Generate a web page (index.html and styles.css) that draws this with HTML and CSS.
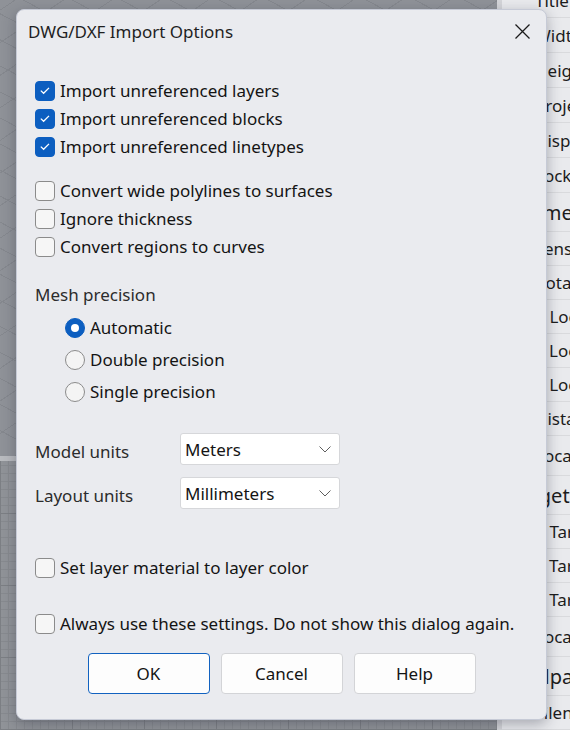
FILE: index.html
```html
<!DOCTYPE html>
<html lang="en">
<head>
    <meta charset="UTF-8">
    <meta name="viewport" content="width=device-width, initial-scale=1.0">
    <title>DWG/DXF Import Options</title>
    <link rel="stylesheet" href="styles.css">
</head>
<body>
    <div class="workspace">
        <div class="viewports">
            <div class="viewport perspective"></div>
            <div class="viewport-divider"></div>
            <div class="viewport plan"></div>
        </div>
        <div class="properties">
            <div class="prop-list">
                <div class="prop-row wide">Title</div>
                <div class="prop-row wide">Width</div>
                <div class="prop-row wide">Height</div>
                <div class="prop-row wide">Projection</div>
                <div class="prop-row wide">Display Mode</div>
                <div class="prop-row wide">Locked</div>
                <div class="prop-head">Camera</div>
                <div class="prop-row">Lens length</div>
                <div class="prop-row">Rotation</div>
                <div class="prop-row">X Location</div>
                <div class="prop-row">Y Location</div>
                <div class="prop-row">Z Location</div>
                <div class="prop-row">Distance to target</div>
                <div class="prop-row tall">Location</div>
                <div class="prop-head outdented">Target</div>
                <div class="prop-row">X Target</div>
                <div class="prop-row">Y Target</div>
                <div class="prop-row">Z Target</div>
                <div class="prop-row tall">Location</div>
                <div class="prop-head outdented">Wallpaper</div>
                <div class="prop-row">Filename</div>
            </div>
        </div>
    </div>

    <div class="dialog">
        <div class="dialog-header">
            <span class="dialog-title">DWG/DXF Import Options</span>
            <button class="close-button" aria-label="Close">
                <svg width="15" height="15" viewBox="0 0 15 15">
                    <path d="M0.5 0.5 L14.5 14.5 M14.5 0.5 L0.5 14.5" stroke="#1b1b1b" stroke-width="1.3" fill="none"/>
                </svg>
            </button>
        </div>

        <div class="dialog-body">
            <div class="option-group first">
                <label class="check-row"><span class="checkbox checked"><svg width="20" height="20" viewBox="0 0 20 20"><path d="M5.8 9.6 L8.6 12.3 L14 6.9" stroke="#fff" stroke-width="1.3" fill="none"/></svg></span>Import unreferenced layers</label>
                <label class="check-row"><span class="checkbox checked"><svg width="20" height="20" viewBox="0 0 20 20"><path d="M5.8 9.6 L8.6 12.3 L14 6.9" stroke="#fff" stroke-width="1.3" fill="none"/></svg></span>Import unreferenced blocks</label>
                <label class="check-row"><span class="checkbox checked"><svg width="20" height="20" viewBox="0 0 20 20"><path d="M5.8 9.6 L8.6 12.3 L14 6.9" stroke="#fff" stroke-width="1.3" fill="none"/></svg></span>Import unreferenced linetypes</label>
            </div>

            <div class="option-group second">
                <label class="check-row"><span class="checkbox"></span>Convert wide polylines to surfaces</label>
                <label class="check-row"><span class="checkbox"></span>Ignore thickness</label>
                <label class="check-row"><span class="checkbox"></span>Convert regions to curves</label>
            </div>

            <div class="section-label">Mesh precision</div>
            <div class="radio-group">
                <label class="radio-row"><span class="radio selected"></span>Automatic</label>
                <label class="radio-row"><span class="radio"></span>Double precision</label>
                <label class="radio-row"><span class="radio"></span>Single precision</label>
            </div>

            <div class="units">
                <div class="unit-row">
                    <span class="unit-label">Model units</span>
                    <div class="select">Meters<svg width="12" height="7" viewBox="0 0 12 7"><path d="M0.5 0.5 L6 6 L11.5 0.5" stroke="#5f5f5f" stroke-width="1" fill="none"/></svg></div>
                </div>
                <div class="unit-row">
                    <span class="unit-label">Layout units</span>
                    <div class="select">Millimeters<svg width="12" height="7" viewBox="0 0 12 7"><path d="M0.5 0.5 L6 6 L11.5 0.5" stroke="#5f5f5f" stroke-width="1" fill="none"/></svg></div>
                </div>
            </div>

            <label class="check-row material"><span class="checkbox"></span>Set layer material to layer color</label>
            <label class="check-row always"><span class="checkbox"></span>Always use these settings. Do not show this dialog again.</label>

            <div class="buttons">
                <button class="dialog-button default">OK</button>
                <button class="dialog-button">Cancel</button>
                <button class="dialog-button">Help</button>
            </div>
        </div>
    </div>
</body>
</html>
```

FILE: styles.css
```css
body {
    margin: 0;
    font-family: "Noto Sans", "Open Sans", sans-serif;
    font-size: 17px;
    color: #141414;
    width: 570px;
    height: 730px;
    overflow: hidden;
    position: relative;
}

.workspace {
    display: flex;
    width: 570px;
    height: 730px;
}

.viewports {
    width: 497px;
    display: flex;
    flex-direction: column;
}

.viewport.perspective {
    height: 456px;
    background-color: #8f9298;
    background-image:
        repeating-linear-gradient(28deg, transparent 0, transparent 22px, #85888e 22px, #85888e 23px),
        repeating-linear-gradient(-34deg, transparent 0, transparent 26px, #85888e 26px, #85888e 27px);
}

.viewport-divider {
    height: 5px;
    background-color: #b9bbbf;
}

.viewport.plan {
    flex: 1;
    background-color: #909398;
    background-image:
        repeating-linear-gradient(90deg, #7c7f84 0, #7c7f84 1px, transparent 1px, transparent 72px),
        repeating-linear-gradient(0deg, #7c7f84 0, #7c7f84 1px, transparent 1px, transparent 72px),
        repeating-linear-gradient(90deg, #878a8f 0, #878a8f 1px, transparent 1px, transparent 8px),
        repeating-linear-gradient(0deg, #878a8f 0, #878a8f 1px, transparent 1px, transparent 8px);
}

.properties {
    flex: 1;
    background-color: #e9eaed;
    border-left: 5px solid #d4d5d9;
    overflow: hidden;
}

.prop-list {
    margin-top: -17px;
}

.prop-row,
.prop-head {
    display: flex;
    align-items: center;
    padding-left: 33px;
    border-bottom: 1px solid #d9dadd;
    box-sizing: border-box;
    white-space: nowrap;
    color: #1c1c1c;
}

.prop-row {
    height: 34px;
}

.prop-row.wide {
    height: 35px;
}

.prop-row.tall {
    height: 40px;
}

.prop-head {
    height: 39px;
    padding-left: 17px;
    font-size: 20px;
}

.prop-head.outdented {
    padding-left: 8px;
}

/* dialog */

.dialog {
    position: absolute;
    left: 16px;
    top: 9px;
    width: 531px;
    height: 711px;
    box-sizing: border-box;
    background-color: #eaebef;
    border: 1px solid #c6cad6;
    border-radius: 8px;
    box-shadow: 0 4px 14px rgba(40, 44, 60, 0.35);
}

.dialog-header {
    height: 42px;
    display: flex;
    align-items: center;
    justify-content: space-between;
    padding: 0 16px 0 11px;
}

.dialog-title {
    font-size: 17px;
    color: #1f1f1f;
}

.close-button {
    background: none;
    border: none;
    padding: 0;
    width: 15px;
    height: 15px;
    display: flex;
}

.dialog-body {
    padding: 0 18px;
}

.option-group.first {
    margin-top: 24px;
}

.option-group.second {
    margin-top: 16px;
}

.check-row {
    display: flex;
    align-items: center;
    height: 28px;
    white-space: nowrap;
}

.checkbox {
    width: 20px;
    height: 20px;
    box-sizing: border-box;
    border: 1px solid #8b8b8b;
    border-radius: 4px;
    background-color: #f6f6f6;
    margin-right: 5px;
    margin-top: 1px;
    flex-shrink: 0;
}

.checkbox.checked {
    background-color: #0c5ec0;
    border-color: #0c5ec0;
}

.checkbox svg {
    display: block;
    margin: -1px;
}

.section-label {
    margin-top: 20px;
    height: 28px;
    display: flex;
    align-items: center;
    color: #2c2c2c;
}

.radio-group {
    margin-top: 3px;
    padding-left: 30px;
}

.radio-row {
    display: flex;
    align-items: center;
    height: 32px;
}

.radio {
    width: 20px;
    height: 20px;
    box-sizing: border-box;
    border: 1px solid #8b8b8b;
    border-radius: 50%;
    background-color: #f4f4f4;
    margin-right: 5px;
    margin-top: 1px;
    display: flex;
    align-items: center;
    justify-content: center;
}

.radio.selected {
    background-color: #0c5ec0;
    border-color: #0c5ec0;
}

.radio.selected::after {
    content: "";
    width: 8px;
    height: 8px;
    border-radius: 50%;
    background-color: #fff;
}

.units {
    margin-top: 26px;
    display: flex;
    flex-direction: column;
    gap: 12px;
}

.unit-row {
    display: flex;
    align-items: center;
    height: 32px;
}

.unit-label {
    width: 145px;
    padding-top: 4px;
    color: #2c2c2c;
}

.select {
    width: 160px;
    height: 32px;
    box-sizing: border-box;
    display: flex;
    align-items: center;
    justify-content: space-between;
    padding: 0 8px 0 4px;
    background-color: #fff;
    border: 1px solid #d6d7da;
    border-radius: 3px;
}

.check-row.material {
    margin-top: 44px;
}

.check-row.always {
    margin-top: 28px;
}

.buttons {
    margin-top: 16px;
    display: flex;
    justify-content: center;
    gap: 11px;
}

.dialog-button {
    width: 122px;
    height: 41px;
    font-family: inherit;
    font-size: 17px;
    color: #141414;
    background-color: #fdfdfd;
    border: 1px solid #d3d4d7;
    border-radius: 4px;
}

.dialog-button.default {
    border-color: #1262c0;
}
```
